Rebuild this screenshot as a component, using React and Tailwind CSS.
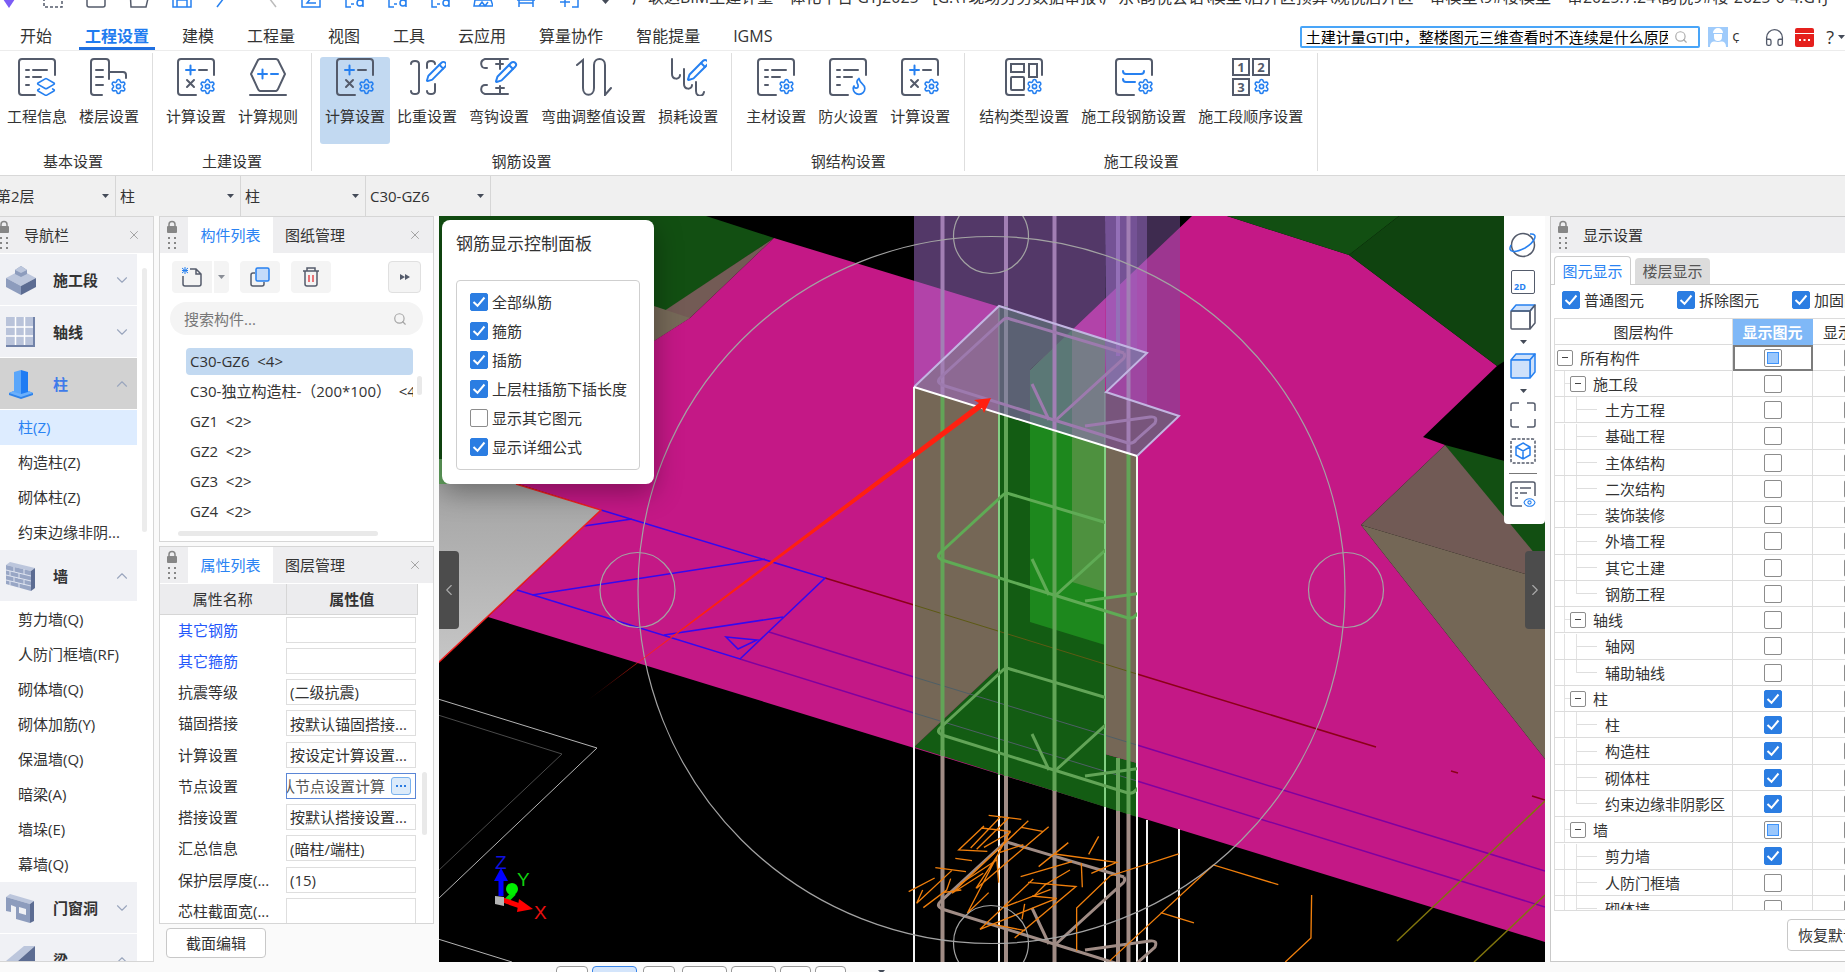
import { Settings, X, ChevronDown, ChevronUp, ChevronLeft, ChevronRight, Search, Pencil, Layers2, Flame, Headphones, Eye } from "lucide-react";

const DARK = "#545b6b";
const BLUE = "#2680f0";

/* ---------- small shared pieces ---------- */

function Check({ id, label, checked, partial, className = "" }) {
  return (
    <label htmlFor={id} className={`flex items-center gap-1 whitespace-nowrap ${className}`}>
      <span className="relative flex size-[18px] shrink-0">
        <input
          id={id}
          type="checkbox"
          defaultChecked={checked}
          aria-label={label ? undefined : id}
          className="peer size-[18px] appearance-none rounded-[2px] border border-[#8c8c8c] bg-white checked:border-[#2b7de2] checked:bg-[#2b7de2]"
        />
        <svg viewBox="0 0 18 18" className="pointer-events-none absolute inset-0 hidden peer-checked:block">
          <path d="M3.5 9 L7.5 12.8 L14.5 4.5" fill="none" stroke="#fff" strokeWidth="2" />
        </svg>
        {partial && <span className="absolute inset-[3px] border border-[#3e93fa] bg-[#9ac7fc]" />}
      </span>
      {label && <span>{label}</span>}
    </label>
  );
}

function Grip() {
  return (
    <svg width="12" height="30" viewBox="0 0 12 30" className="shrink-0">
      <path d="M3 7V4.5a3 3 0 0 1 6 0V7" fill="none" stroke="#868686" strokeWidth="1.5" />
      <rect x="1" y="6" width="10" height="7" rx="1" fill="#868686" />
      {[17, 22, 27].map((y) => (
        <g key={y} fill="#868686">
          <rect x="2" y={y} width="2" height="2" />
          <rect x="8" y={y} width="2" height="2" />
        </g>
      ))}
    </svg>
  );
}

function Caret({ className = "" }) {
  return (
    <svg width="7" height="4" viewBox="0 0 7 4" className={className}>
      <path d="M0 0h7L3.5 4z" fill="#444b58" />
    </svg>
  );
}

/* ---------- ribbon icons ---------- */

function Glyph({ children }) {
  return (
    <svg width="38" height="38" viewBox="0 0 38 38" fill="none" stroke={DARK} strokeWidth="2" strokeLinecap="round">
      {children}
    </svg>
  );
}

const Gear = ({ x = 21, y = 20 }) => <Settings x={x} y={y} size={17} color={BLUE} strokeWidth={2.2} />;

const Frame = () => <path d="M37 17V4a3 3 0 0 0-3-3H4a3 3 0 0 0-3 3v30a3 3 0 0 0 3 3h15" />;

const Lines = () => <path d="M8 12h3M15 12h14M8 19h3M15 19h8M8 27h3" />;

const CalcIcon = () => (
  <Glyph>
    <Frame />
    <path d="M9 12h9M13.500 7.500v9" stroke={BLUE} />
    <path d="M22 12h8M10 22l7 7M17 22l-7 7" />
    <Gear x={22} />
  </Glyph>
);

const icons = {
  info: () => (
    <Glyph>
      <path d="M37 17V4a3 3 0 0 0-3-3H4a3 3 0 0 0-3 3v30a3 3 0 0 0 3 3h13" />
      <Lines />
      <Layers2 x={18} y={19} size={20} color={BLUE} strokeWidth={2} />
    </Glyph>
  ),
  floor: () => (
    <Glyph>
      <path d="M12 37H4a3 3 0 0 1-3-3V4a3 3 0 0 1 3-3h12a3 3 0 0 1 3 3v17M6 12h7M6 19h7M6 27h7M19 14h14a3 3 0 0 1 3 3v3" />
      <Gear x={20} />
    </Glyph>
  ),
  calc: CalcIcon,
  rule: () => (
    <Glyph>
      <path d="M11 1h16a3 3 0 0 1 2 1l7 14-7 15a3 3 0 0 1-2 2H11a3 3 0 0 1-2-2L2 16 9 2a3 3 0 0 1 2-1z" />
      <path d="M9 16h9M13.500 11.500v9M22 16h7" stroke={BLUE} />
      <path d="M1 37h36" />
    </Glyph>
  ),
  weight: () => (
    <Glyph>
      <path d="M3 6c0-4 8-4 8 0v27c0 4-8 4-8 0M19 10V6c0-4 8-4 8 0M27 26v7c0 4-8 4-8 0" />
      <Pencil x={17} y={2} size={23} color={BLUE} strokeWidth={2} />
    </Glyph>
  ),
  hook: () => (
    <Glyph>
      <path d="M28 1H5c-6 2-4 9 0 9h2M20 1v10M16 6h7M28 36H5c-6-2-4-9 0-9h2M20 28v8M16 30h8" />
      <Pencil x={14} y={2} size={24} color={BLUE} strokeWidth={2} />
    </Glyph>
  ),
  bend: () => (
    <Glyph>
      <path d="M2 7l6-5v28c0 9 11 9 11 0V7c0-8 11-8 11 0v30l6-7" />
    </Glyph>
  ),
  loss: () => (
    <Glyph>
      <path d="M3 1v15c0 6 8 6 8 1M15 11v15c0 6 8 6 8 1M27 24v9c0 6 7 6 8 1" />
      <Pencil x={17} y={0} size={24} color={BLUE} strokeWidth={2} />
    </Glyph>
  ),
  material: () => (
    <Glyph>
      <Frame />
      <Lines />
      <Gear />
    </Glyph>
  ),
  fire: () => (
    <Glyph>
      <Frame />
      <Lines />
      <Flame x={20} y={18} size={20} color={BLUE} strokeWidth={2} />
    </Glyph>
  ),
  structure: () => (
    <Glyph>
      <Frame />
      <rect x="6" y="6" width="13" height="8" />
      <rect x="24" y="6" width="8" height="13" />
      <rect x="6" y="19" width="13" height="13" rx="1" />
      <Gear />
    </Glyph>
  ),
  section: () => (
    <Glyph>
      <Frame />
      <path d="M8 13c0 2 1 3 3 3h15c2 0 3-1 3-3M8 21c0 2 1 3 3 3h9" stroke={BLUE} />
      <Gear x={22} />
    </Glyph>
  ),
  order: () => (
    <Glyph>
      <rect x="1" y="1" width="16" height="16" />
      <rect x="21" y="1" width="16" height="16" />
      <rect x="1" y="21" width="16" height="16" />
      <g fill={DARK} stroke="none" fontSize="13" fontWeight="700" textAnchor="middle" fontFamily="Open Sans, sans-serif">
        <text x="9" y="14">1</text>
        <text x="29" y="14">2</text>
        <text x="9" y="34">3</text>
      </g>
      <Gear x={21} />
    </Glyph>
  ),
};

const ribbon = [
  { name: "基本设置", pad: "pl-0.5 pr-2", items: [["info", "工程信息"], ["floor", "楼层设置"]] },
  { name: "土建设置", pad: "px-2", items: [["calc", "计算设置"], ["rule", "计算规则"]] },
  {
    name: "钢筋设置",
    pad: "px-2",
    items: [["calc", "计算设置", true], ["weight", "比重设置"], ["hook", "弯钩设置"], ["bend", "弯曲调整值设置"], ["loss", "损耗设置"]],
  },
  { name: "钢结构设置", pad: "px-[9px]", items: [["material", "主材设置"], ["fire", "防火设置"], ["calc", "计算设置"]] },
  { name: "施工段设置", pad: "px-[9px]", items: [["structure", "结构类型设置"], ["section", "施工段钢筋设置"], ["order", "施工段顺序设置"]] },
];

function Ribbon() {
  return (
    <div className="flex h-[125px] shrink-0 border-b border-[#d8d8d8] bg-white pt-0.5 pb-1">
      {ribbon.map((group) => (
        <section key={group.name} className={`flex flex-col justify-between border-r border-[#dedede] pt-1 ${group.pad}`}>
          <div className="flex gap-0.5">
            {group.items.map(([icon, label, active]) => {
              const Icon = icons[icon];
              return (
                <button
                  key={label}
                  className={`flex h-[87px] flex-col items-center gap-2.5 rounded-[3px] px-[5px] pt-px whitespace-nowrap ${active ? "bg-[#c2d9f1]" : ""}`}
                >
                  <Icon />
                  <span className="leading-5">{label}</span>
                </button>
              );
            })}
          </div>
          <h2 className="text-center leading-5">{group.name}</h2>
        </section>
      ))}
    </div>
  );
}

/* ---------- top bars ---------- */

function QuickIcon({ kind }) {
  const shapes = {
    logo: <path d="M1 8l8-5 8 5-8 12z" fill="#7b5cf5" />,
    dashed: <rect x="1" y="1" width="18" height="18" stroke={DARK} strokeDasharray="3 2" />,
    file: <path d="M1 1h18v16a2 2 0 0 1-2 2H3a2 2 0 0 1-2-2z" stroke={DARK} />,
    open: <path d="M5 6h15l-3 13H2L1 1" stroke={DARK} />,
    save: <path d="M1 1h18v18H1zM5 19v-7h10v7" stroke={BLUE} />,
    undo: <path d="M12 6L2 19" stroke={BLUE} />,
    redo: <path d="M8 6l10 13" stroke="#bbb" />,
    sum: <path d="M1 1h18v18H1zM14 5l-8 10h9" stroke={BLUE} />,
    find: <path d="M2 1v18h5M10 16h-3M19 10v9M19 15a3 3 0 1 1-6 0 3 3 0 0 1 6 0" stroke={BLUE} />,
    cloud: <path d="M2 12h16l2 6H1zM6 18l3-4 3 4 3-4" stroke={BLUE} />,
    frame: <path d="M3 1v18M17 1v18M3 15h14M1 12h18" stroke={BLUE} />,
    add: <path d="M9 1h10v18h-6M1 14h10M6 9v10" stroke={BLUE} />,
  };
  return (
    <svg width="20" height="20" viewBox="0 0 20 20" fill="none" strokeWidth="1.500" className="shrink-0">
      {shapes[kind]}
    </svg>
  );
}

const quickTools = ["logo", "dashed", "file", "open", "save", "undo", "redo", "sum", "find", "find", "find", "cloud", "frame", "add"];
const menus = ["开始", "工程设置", "建模", "工程量", "视图", "工具", "云应用", "算量协作", "智能提量", "IGMS"];

function TopBars() {
  return (
    <header className="shrink-0 bg-white">
      <div className="flex h-2 items-end gap-[23px] overflow-hidden">
        {quickTools.map((kind, i) => (
          <QuickIcon key={i} kind={kind} />
        ))}
        <Caret className="mb-1 shrink-0" />
        <h1 className="flex-1 text-[16px] leading-[22px] whitespace-nowrap">
          广联达BIM土建计量一体化平台 GTJ2025 - [G:\1现场劳务数据审报\广东\韵悦会语\模型\后开区预算\观悦后开区一审模型\9#楼模型一审2025.7.24\韵悦9#楼-2025-6-4.GTJ
        </h1>
      </div>
      <div className="flex h-[43px] items-end border-b border-[#ececec]">
        <nav className="flex flex-1 gap-px pl-1 text-[16px]">
          {menus.map((m, i) => (
            <a key={m} href="#" className={`relative px-4 leading-[28px] ${i === 1 ? "font-bold text-[#1f7cf0]" : ""}`}>
              {m}
              {i === 1 && <span className="absolute inset-x-2.5 bottom-0 h-[3px] bg-[#1f6fe0]" />}
            </a>
          ))}
        </nav>
        <div className="mb-0.5 flex items-center">
          <div className="flex h-[22px] w-[400px] items-center rounded-[2px] border-2 border-[#49a5f8] px-1">
            <input
              aria-label="搜索"
              defaultValue="土建计量GTJ中，整楼图元三维查看时不连续是什么原因"
              className="h-4 min-w-0 flex-1 text-[15px] text-black outline-none"
            />
            <Search size={14} color="#aaa" className="mx-1.5" />
          </div>
          <svg width="20" height="20" viewBox="0 0 20 20" className="ml-2">
            <rect width="20" height="20" fill="#9fcbfb" />
            <path d="M5 6a5 5 0 0 1 10 0zM6 7h8v3a4 4 0 0 1-8 0zM2 20c0-6 4-6 8-5 4-1 8-1 8 5z" fill="#fff" />
          </svg>
          <span className="ml-1">¢</span>
          <Headphones size={21} color={DARK} strokeWidth={1.5} className="ml-6" />
          <svg width="19" height="19" viewBox="0 0 19 19" className="ml-2.5">
            <rect width="19" height="19" rx="2" fill="#e5201d" />
            <path d="M0 5.500h19" stroke="#fff" />
            <path d="M4 12h2M8.500 12h2M13 12h2" stroke="#fff" strokeWidth="2" />
          </svg>
          <span className="ml-3 text-[18px] leading-5">?</span>
          <Caret className="ml-1" />
        </div>
      </div>
    </header>
  );
}

const selectors = [["楼层", "第2层", "w-[116px]"], ["构件大类", "柱", "w-[125px] pl-1"], ["构件类型", "柱", "w-[125px] pl-1"], ["构件", "C30-GZ6", "w-[125px] pl-1"]];

function SelectorBar() {
  return (
    <div className="flex h-10 shrink-0 bg-[#f0f0f0]">
      {selectors.map(([name, value, cls], i) => (
        <div key={name} className={`relative flex items-center border-r border-[#d6d6d6] ${cls}`}>
          <select aria-label={name} className={`w-full appearance-none bg-transparent outline-none ${i === 0 ? "-ml-1" : ""}`}>
            <option>{value}</option>
          </select>
          <Caret className="absolute right-1.5" />
        </div>
      ))}
    </div>
  );
}

/* ---------- navigation ---------- */

const navIcons = {
  施工段: (
    <g>
      <path d="M0 13l15-8 15 8-15 8z" fill="#bcc6dc" />
      <path d="M0 13l15 8v9L0 22z" fill="#8d9cbd" />
      <path d="M30 13l-15 8v9l15-8z" fill="#5c6c92" />
      <path d="M9 5l6-4 6 4v4l-6 3-6-3z" fill="#8d9cbd" />
      <path d="M9 5l6-4 6 4-6 3z" fill="#bcc6dc" />
    </g>
  ),
  轴线: (
    <g>
      <rect width="29" height="30" fill="#7182a8" />
      <rect width="27" height="28" fill="#b9c3da" />
      <path d="M9.500 0v28M18.500 0v28M0 10h27M0 19h27" stroke="#fff" strokeWidth="1.500" />
    </g>
  ),
  柱: (
    <g>
      <path d="M3 24l12-5 12 5v2l-12 4-12-4z" fill="#2f83ea" />
      <path d="M3 24l12-5 12 5-12 4z" fill="#6cb0fb" />
      <path d="M8 3l7-2v24l-7-2z" fill="#5aa6fa" />
      <path d="M15 1l7 2v20l-7 2z" fill="#1f7cf3" />
    </g>
  ),
  墙: (
    <g>
      <path d="M0 4l4-3 25 6-4 3z" fill="#bcc6dc" />
      <path d="M0 4l25 6v20L0 23z" fill="#98a6c5" />
      <path d="M25 10l4-3v20l-4 3z" fill="#5c6c92" />
      <path d="M0 9l25 6M0 14l25 6M0 19l25 6M8 6v5M18 8v5M4 10v5M13 12v6M8 16v5M18 19v5M4 20v4M13 22v5" stroke="#dfe4f0" />
    </g>
  ),
  门窗洞: (
    <g>
      <path d="M0 4l4-3 24 7-4 3z" fill="#bcc6dc" />
      <path fillRule="evenodd" d="M0 4l24 7v19l-14-4v-12l-5-2v7l-5-1zM13 14v6l7 2v-6z" fill="#8d9cbd" />
      <path d="M24 11l4-3v20l-4 2z" fill="#5c6c92" />
    </g>
  ),
  梁: (
    <g>
      <path d="M0 16L18 1h11L12 16z" fill="#bcc6dc" />
      <path d="M12 16L29 1v16H12z" fill="#5c6c92" />
    </g>
  ),
};

const nav = [
  { name: "施工段" },
  { name: "轴线" },
  { name: "柱", open: true, active: true, items: ["柱(Z)", "构造柱(Z)", "砌体柱(Z)", "约束边缘非阴..."] },
  { name: "墙", open: true, items: ["剪力墙(Q)", "人防门框墙(RF)", "砌体墙(Q)", "砌体加筋(Y)", "保温墙(Q)", "暗梁(A)", "墙垛(E)", "幕墙(Q)"] },
  { name: "门窗洞" },
  { name: "梁", open: true },
];

function NavPanel() {
  return (
    <aside className="flex w-[154px] shrink-0 flex-col border-t border-r border-b border-[#d6d6d6] bg-white">
      <div className="flex h-9 shrink-0 items-center bg-[#eeeef0] pr-3">
        <span className="-ml-0.5">
          <Grip />
        </span>
        <h2 className="ml-3.5 flex-1">导航栏</h2>
        <button aria-label="关闭导航栏">
          <X size={14} color="#999" strokeWidth={1.5} />
        </button>
      </div>
      <div className="flex min-h-0 flex-1 pt-px">
        <div className="w-[137px] overflow-hidden">
          {nav.map((g) => (
            <div key={g.name}>
              <button className={`flex h-[52px] w-full items-center border-b border-white pr-1.5 pl-1.5 ${g.active ? "bg-[#d2d2d2]" : "bg-[#f0f1f5]"}`}>
                <svg width="30" height="30" viewBox="0 0 30 30">{navIcons[g.name]}</svg>
                <span className={`ml-[17px] flex-1 text-left font-semibold ${g.active ? "text-[#3f7bea]" : ""}`}>{g.name}</span>
                {g.open ? <ChevronUp size={18} color="#9aa6bd" strokeWidth={1.5} /> : <ChevronDown size={18} color="#9aa6bd" strokeWidth={1.5} />}
              </button>
              {g.items?.map((item, i) => (
                <a
                  key={item}
                  href="#"
                  className={`block pl-[18px] leading-[35px] whitespace-nowrap ${g.active && i === 0 ? "bg-[#ddecff] text-[#2a83f3]" : ""}`}
                >
                  {item}
                </a>
              ))}
            </div>
          ))}
        </div>
        <div className="mt-3.5 ml-[5px] h-[264px] w-[5px] rounded-full bg-[#ececec]" />
      </div>
    </aside>
  );
}

/* ---------- component list and properties ---------- */

function TabHeader({ tabs }) {
  return (
    <div className="flex h-9 shrink-0 items-center bg-[#eeeef0] pr-[11px] pl-1.5">
      <Grip />
      <button className="ml-2.5 h-full w-[85px] bg-white text-[#2a83f3]">{tabs[0]}</button>
      <button className="h-full flex-1 pl-3 text-left">{tabs[1]}</button>
      <button aria-label="关闭">
        <X size={14} color="#999" strokeWidth={1.5} />
      </button>
    </div>
  );
}

const components = ["C30-GZ6  <4>", "C30-独立构造柱-（200*100）  <4>", "GZ1  <2>", "GZ2  <2>", "GZ3  <2>", "GZ4  <2>"];

function ComponentPanel() {
  return (
    <section className="flex h-[326px] shrink-0 flex-col border border-[#d6d6d6] bg-white">
      <TabHeader tabs={["构件列表", "图纸管理"]} />
      <div className="mt-2 flex h-8 shrink-0 px-3">
        <button aria-label="新建" className="flex w-10 items-center justify-center rounded-l bg-[#f4f4f4]">
          <svg width="20" height="20" viewBox="0 0 20 20" fill="none" strokeWidth="1.500">
            <path d="M8 2h6l5 5v10a2 2 0 0 1-2 2H3a2 2 0 0 1-2-2V9M14 2v5h5" stroke={DARK} />
            <path d="M0 1l6 5M6 1L0 6M3 0v7M0 3.500h6" stroke={BLUE} strokeWidth="1" />
          </svg>
        </button>
        <button aria-label="新建选项" className="ml-0.5 flex w-[15px] items-center justify-center rounded-r bg-[#f4f4f4]">
          <Caret className="opacity-60" />
        </button>
        <button aria-label="复制" className="ml-[11px] flex w-10 items-center justify-center rounded bg-[#f4f4f4]">
          <svg width="20" height="20" viewBox="0 0 20 20" fill="none" strokeWidth="1.500">
            <path d="M5 6H3a2 2 0 0 0-2 2v9a2 2 0 0 0 2 2h9a2 2 0 0 0 2-2v-2" stroke={DARK} />
            <rect x="6" y="1" width="13" height="13" rx="1.500" stroke={BLUE} fill="#c4dbfa" />
          </svg>
        </button>
        <button aria-label="删除" className="ml-[11px] flex w-10 items-center justify-center rounded bg-[#f4f4f4]">
          <svg width="18" height="20" viewBox="0 0 18 20" fill="none" strokeWidth="1.500">
            <path d="M1 4h16M5 4V1h8v3M3 4v13a2 2 0 0 0 2 2h8a2 2 0 0 0 2-2V4" stroke={DARK} />
            <path d="M7 8v7M11 8v7" stroke="#e5484d" />
          </svg>
        </button>
        <button aria-label="更多" className="ml-auto flex w-[33px] items-center justify-center rounded border border-[#e0e0e0] bg-[#f4f4f4]">
          <svg width="10" height="6" viewBox="0 0 10 6">
            <path d="M0 0l5 3-5 3zM5 0l5 3-5 3z" fill={DARK} />
          </svg>
        </button>
      </div>
      <div className="mx-2.5 mt-[9px] flex h-[33px] shrink-0 items-center rounded-full bg-[#f4f4f4] pr-4 pl-3.5">
        <input aria-label="搜索构件" placeholder="搜索构件..." className="min-w-0 flex-1 outline-none placeholder:text-[#777]" />
        <Search size={14} color="#a5a5a5" />
      </div>
      <div className="mt-[13px] flex min-h-0 flex-1 pl-[26px]">
        <ul className="w-[227px] overflow-hidden">
          {components.map((c, i) => (
            <li key={c} className={`mb-[3px] rounded-sm pl-1 leading-[27px] whitespace-pre ${i === 0 ? "bg-[#c2d9f1]" : ""}`}>
              {c}
            </li>
          ))}
        </ul>
        <div className="mt-7 ml-1 h-[19px] w-[5px] rounded-full bg-[#e9e9e9]" />
      </div>
      <div className="mb-[5px] ml-[18px] h-[5px] w-[200px] rounded-full bg-[#e9e9e9]" />
    </section>
  );
}

const props = [
  ["其它钢筋", ""],
  ["其它箍筋", ""],
  ["抗震等级", "(二级抗震)"],
  ["锚固搭接", "按默认锚固搭接..."],
  ["计算设置", "按设定计算设置..."],
  ["节点设置", "按默认节点设置计算"],
  ["搭接设置", "按默认搭接设置..."],
  ["汇总信息", "(暗柱/端柱)"],
  ["保护层厚度(...", "(15)"],
  ["芯柱截面宽(...", ""],
];

function PropertyPanel() {
  return (
    <section className="mt-1 flex min-h-0 flex-1 flex-col">
      <div className="flex min-h-0 flex-1 flex-col overflow-hidden border border-[#d6d6d6] bg-white">
        <TabHeader tabs={["属性列表", "图层管理"]} />
        <div className="mt-px flex min-h-0 flex-1">
          <div className="w-[258px] overflow-hidden">
            <table className="w-full table-fixed border-collapse">
              <thead>
                <tr className="h-[30px] bg-[#ececee]">
                  <th className="w-[126px] border-r border-b border-[#d6d6d6] font-normal">属性名称</th>
                  <th className="border-r border-b border-[#d6d6d6] font-semibold">属性值</th>
                </tr>
              </thead>
              <tbody>
                {props.map(([name, value], i) => (
                  <tr key={name} className="h-[31px] nth-[4n]:h-8">
                    <td className="pl-[18px] whitespace-nowrap">
                      <label htmlFor={`prop-${i}`} className={i < 2 ? "text-[#2458fb]" : ""}>
                        {name}
                      </label>
                    </td>
                    <td>
                      <div className={`flex h-[26px] w-[130px] items-center overflow-hidden border ${i === 5 ? "border-[#5b86d6]" : "border-[#dedede]"}`}>
                        <input
                          id={`prop-${i}`}
                          defaultValue={value}
                          className={`h-6 min-w-0 flex-1 outline-none ${i === 5 ? "-indent-[37px] text-[#555]" : "pl-[3px]"}`}
                        />
                        {i === 5 && (
                          <button
                            aria-label="编辑节点设置"
                            className="mr-1 flex h-[18px] w-5 items-center justify-center gap-0.5 rounded-[3px] border border-[#7ab2ee] bg-[#dcebfa]"
                          >
                            <span className="size-0.5 bg-[#2a7be0]" />
                            <span className="size-0.5 bg-[#2a7be0]" />
                            <span className="size-0.5 bg-[#2a7be0]" />
                          </button>
                        )}
                      </div>
                    </td>
                  </tr>
                ))}
              </tbody>
            </table>
          </div>
          <div className="mt-[188px] ml-1 h-[63px] w-[5px] rounded-full bg-[#e9e9e9]" />
        </div>
      </div>
      <div className="flex h-[38px] shrink-0 items-start pt-1 pl-[7px]">
        <button className="h-[30px] w-[100px] rounded border border-[#c8c8c8] bg-white">截面编辑</button>
      </div>
    </section>
  );
}

/* ---------- 3D view ---------- */

// one stirrup outline, drawn again for each level of the column
const hoopBack = "M1054 420 L942 385 Q936 382 940 378 L1003 320 Q1006 317 1010 319 L1124 353";
const hoopCross = "M1124 353 Q1126 357 1122 360 L1056 420 M1032 384 L1049 420";
const hoopFront = "M1054 420 L1128 443 Q1133 444 1136 440 L1155 423 Q1158 416 1150 417 L1085 426";

function Hoop({ y = 0, color, width = 3, clip }) {
  return (
    <g clipPath={clip && `url(#${clip})`} fill="none" stroke={color} strokeWidth={width}>
      <g transform={`translate(0 ${y})`}>
        <path d={hoopBack} />
        <path d={hoopCross} />
      </g>
    </g>
  );
}

function HoopFront({ y = 0, color, width = 3, clip }) {
  return (
    <g clipPath={clip && `url(#${clip})`} fill="none" stroke={color} strokeWidth={width}>
      <path transform={`translate(0 ${y})`} d={hoopFront} />
    </g>
  );
}

function Scene() {
  return (
    <svg viewBox="439 216 1106 746" preserveAspectRatio="xMidYMid slice" className="block h-full w-full bg-black">
      <defs>
        <clipPath id="inner">
          <rect x="914" y="400" width="191" height="562" />
        </clipPath>
        <clipPath id="body">
          <rect x="914" y="400" width="223" height="562" />
        </clipPath>
        <linearGradient id="slab" x1="0" y1="0" x2="0" y2="1">
          <stop offset="0" stopColor="#a4a4a4" />
          <stop offset="1" stopColor="#c6c6c6" />
        </linearGradient>
        <linearGradient id="trail" gradientUnits="userSpaceOnUse" x1="588" y1="700" x2="680" y2="630">
          <stop offset="0" stopColor="#ff2010" stopOpacity="0.300" />
          <stop offset="1" stopColor="#ff2010" />
        </linearGradient>
      </defs>

      {/* surrounding slabs */}
      <path d="M438 216H706L774 238L655 318L600 460H438z" fill="#124f12" />
      <path d="M438 459H470V484H438z" fill="#63a45f" />
      <path d="M774 238L640 327V350L690 318z" fill="#735b55" />
      <path d="M654 306L690 318L640 350z" fill="#766958" />
      <path d="M438 484L516 484L601 510L438 663z" fill="url(#slab)" />
      <path d="M774 238L1000 307L1030 370L1192 216H1227L1349 255L1497 366L1423 437L1445 445L1361 525L1545 759V942L488 617L601 510L480 472L654 341L690 318z" fill="#c41886" />
      <path d="M1227 216H1399L1349 255z" fill="#124f12" />
      <path d="M1399 216H1545V335L1497 366L1349 255z" fill="#0f430f" />
      <path d="M1445 445L1545 472V566L1530 554z" fill="#124f12" />
      <path d="M1361 525L1445 445L1545 566V580z" fill="#715a55" />
      <path d="M1361 525L1545 580V759z" fill="#746756" />

      {/* upper column, translucent */}
      <path d="M914 216H1105V392L1000 307L914 387z" fill="#a16dca" fillOpacity="0.515" />
      <path d="M1105 216H1137V362L1106 392z" fill="#986bc3" fillOpacity="0.765" />
      <path d="M1137 216H1147V353L1137 362z" fill="#986bc3" fillOpacity="0.680" />
      <path d="M1147 216H1180V416L1106 392L1147 353z" fill="#78539a" fillOpacity="0.515" />
      <path d="M1106 392L1137 362L1147 353V405z" fill="#a16dca" fillOpacity="0.300" />

      {/* lower column */}
      <path d="M914 387L999 414V667L914 747z" fill="#756756" />
      <path d="M999 414L1105 446V754L1137 763V817L914 747L999 667z" fill="#135c13" />
      <path d="M1030 423L1105 446V645L1030 622z" fill="#1d881d" />
      <path d="M1072 436L1105 446V592L1072 582z" fill="#4e913f" />
      <path d="M1105 446L1137 456V763L1105 754z" fill="#756756" />

      {/* cut face between the levels */}
      <path d="M914 387L999 306V414z" fill="#8d6993" />
      <path d="M999 306L1074 329L1030 370V423L999 414z" fill="#5b6173" />
      <path d="M1030 370L1072 330V436L1030 423z" fill="#5b7876" />
      <path d="M1072 329L1105 339V446L1072 436z" fill="#767c87" />
      <path d="M1105 339L1147 353L1106 392z" fill="#836ea5" />
      <path d="M1105 392L1179 416L1137 456L1105 446z" fill="#78557c" />

      {/* axis lines and slab edges */}
      <g fill="none" strokeWidth="1">
        <path d="M825 578L914 605M1137 674L1376 747M1451 771L1458 773M1532 796L1545 800" stroke="#8c0018" strokeWidth="1.500" />
        <path d="M914 605L1137 674" stroke="#5d5a14" />
        <path d="M769 632L914 677M1137 745L1545 871M740 659L914 713M1137 781L1545 907" stroke="#8000a0" strokeWidth="1.500" />
        <path d="M914 677L1137 745M914 713L1137 781" stroke="#4f5f66" />
        <path d="M1545 801L1397 941M1545 895L1474 962" stroke="#80740c" strokeWidth="1.500" />
        <g stroke="#3408f0" strokeWidth="1.500">
          <path d="M601 510L825 578L740 659L517 590M532 595L765 559M584 526L632 519M664 635L783 617M726 637L757 640L738 649z" />
        </g>
        <path d="M438 663L601 510L516 484" stroke="#ee2020" strokeWidth="1.500" />
        <path d="M438 699L597 748L438 899M438 939L512 962" stroke="#b4b4b4" />
        <path d="M438 715L562 754L438 871" stroke="#4a4a4a" />
      </g>

      {/* longitudinal bars */}
      <g strokeWidth="4">
        <path d="M942.500 750V962M1006 770V962M1054.500 790V962M1118 811V962M1128.500 814V962" stroke="#a08c85" />
        <path d="M942.500 396V756M1006 416V776M1054.500 431V791M1128.500 454V814M1118 758V811" stroke="#62a457" />
        <path d="M942.500 216V396M1006 216V306M1054.500 216V431M1128.500 216V454" stroke="#a27fb4" />
        <path d="M1118 216V356" stroke="#9470b8" />
        <path d="M1006 306V416" stroke="#85859a" />
      </g>

      {/* column edges */}
      <g fill="none" strokeWidth="2">
        <path d="M914 747V962M999 775V962M1105 807V962M1137 817V962M1147 820V962M1179 829V962" stroke="#f4f4f4" />
        <path d="M999 414V775M1105 446V807" stroke="#84d084" />
        <path d="M914 387V747M1137 456V817" stroke="#f0f8f0" />
        <path d="M999 306V414M1105 392V446" stroke="#8a9ba0" strokeWidth="1" />
        <path d="M914 387L999 306L1147 353L1106 392L1179 416L1137 456" stroke="#c3b5e2" />
        <path d="M914 387L1137 456" stroke="#fff" />
      </g>

      {/* stirrups */}
      <Hoop color="#9d7aae" />
      <HoopFront color="#9d7aae" />
      <Hoop y={175} color="#5fab55" clip="inner" />
      <HoopFront y={175} color="#5fab55" clip="body" />
      <Hoop y={350} color="#62a457" clip="inner" />
      <HoopFront y={350} color="#62a457" clip="body" />
      <Hoop y={524} color="#a08c85" />
      <HoopFront y={524} color="#a08c85" />

      {/* annotation text strokes on the lower floor */}
      <g transform="translate(880 580) scale(0.3333)" fill="none" stroke="#f07f0c" strokeWidth="4">
        <path d="M326 706L424 718M312 738L236 810L322 814M304 744L390 754L262 1000L326 938M360 712L272 804M388 712L290 808M445 722L216 940L310 880M506 740L290 925M424 742L488 754M430 794L358 818L288 925M226 835L276 842M166 863L258 875M215 872L110 970L128 930M86 935L164 894M130 983L200 930L212 896M188 938L244 930" />
        <path d="M565 788L476 860M524 822L710 847L634 880M656 769L626 823M604 850L607 922M422 890L576 845M570 870L494 915M460 897L300 1048L530 955L456 948M444 907L588 920L404 1074M512 928L366 984M434 972L426 1018M344 1034L436 1052M350 830L356 908M240 912L350 840" />
        <path d="M896 822L690 888L590 984V1112M690 1142L1000 855L1195 914M842 998L942 1029M1295 945L1293 1074L1216 1146M312 802L392 756M500 910L460 950" />
      </g>

      {/* orbit control */}
      <g fill="none" stroke="#a3a3a3" strokeWidth="1.200">
        <circle cx="991.500" cy="590" r="353.500" />
        <circle cx="991" cy="236" r="37.500" />
        <circle cx="637.500" cy="590" r="37.500" />
        <circle cx="1346" cy="590" r="37.500" />
        <circle cx="991" cy="943" r="37.500" />
      </g>

      <path d="M588 700L979 403L974 400L991 398L984 413L982 408z" fill="url(#trail)" />

      {/* coordinate gizmo */}
      <path d="M505 902L514 893" stroke="#00e000" strokeWidth="5" />
      <circle cx="512" cy="889" r="6" fill="#00f000" />
      <path d="M503 900L520 906" stroke="#f00" strokeWidth="5" />
      <path d="M519 899L533 909L517 912z" fill="#f00" />
      <path d="M501 896V878" stroke="#00f" strokeWidth="5" />
      <path d="M494 881L501 868L508 881z" fill="#00f" />
      <path d="M495 896L504 897V906L495 904z" fill="#b4b4b4" />
      <g fontFamily="Liberation Sans, sans-serif" fontSize="19">
        <text x="495" y="869" fill="#1010e0">Z</text>
        <text x="517" y="886" fill="#10d010">Y</text>
        <text x="534" y="919" fill="#e81010">X</text>
      </g>
    </svg>
  );
}

const rebarOptions = [["全部纵筋", true], ["箍筋", true], ["插筋", true], ["上层柱插筋下插长度", true], ["显示其它图元", false], ["显示详细公式", true]];

function RebarDialog() {
  return (
    <div role="dialog" aria-label="钢筋显示控制面板" className="absolute top-1 left-[3px] h-[264px] w-[212px] rounded-lg bg-white px-3.5 pt-2.5 shadow-[0_8px_28px_rgba(0,0,0,0.35)]">
      <h2 className="text-[17px] leading-7">钢筋显示控制面板</h2>
      <fieldset className="mt-[22px] flex h-[190px] flex-col gap-[3px] rounded border border-[#cfcfcf] pt-2 pl-[13px]">
        {rebarOptions.map(([label, on]) => (
          <Check key={label} id={`rebar-${label}`} label={label} checked={on} className="h-[26px]" />
        ))}
      </fieldset>
    </div>
  );
}

function Cube({ fill, stroke }) {
  return (
    <svg width="26" height="26" viewBox="0 0 26 26" fill="none" strokeWidth="1.500" strokeLinejoin="round">
      <path d="M1 7L6 1h19l-5 6z" fill="#cfe1fa" stroke={BLUE} />
      <path d="M20 7l5-6v18l-5 6z" fill={fill} stroke={stroke} />
      <rect x="1" y="7" width="19" height="18" rx="1" fill={fill} stroke={stroke} />
    </svg>
  );
}

function ViewToolbar() {
  return (
    <div className="absolute top-0 right-0 flex h-[308px] w-[41px] flex-col items-center rounded-b bg-white pt-[15px] pr-[3px]">
      <button aria-label="动态观察">
        <svg width="28" height="28" viewBox="0 0 28 28" fill="none" strokeWidth="1.500">
          <circle cx="14" cy="14" r="11.500" stroke={DARK} />
          <path d="M21 3c9-1 5 8-5 14C6 22-2 22 2 14" stroke={BLUE} />
        </svg>
      </button>
      <button aria-label="二维视图" className="mt-[11px] flex size-6 items-end rounded-[2px] border border-[#545b6b] pl-0.5 text-[9px] leading-[13px] font-bold text-[#2680f0]">
        2D
      </button>
      <button aria-label="视图方向" className="mt-2.5 flex flex-col items-center gap-2.5">
        <Cube fill="none" stroke={DARK} />
        <Caret />
      </button>
      <button aria-label="显示样式" className="mt-[9px] flex flex-col items-center gap-2.5">
        <Cube fill="#cfe1fa" stroke={BLUE} />
        <Caret />
      </button>
      <button aria-label="全屏" className="mt-[9px]">
        <svg width="26" height="26" viewBox="0 0 26 26" fill="none" stroke={DARK} strokeWidth="1.500">
          <path d="M1 9V3a2 2 0 0 1 2-2h6M17 1h6a2 2 0 0 1 2 2v6M25 17v6a2 2 0 0 1-2 2h-6M9 25H3a2 2 0 0 1-2-2v-6" />
        </svg>
      </button>
      <button aria-label="局部三维" className="mt-2.5">
        <svg width="26" height="26" viewBox="0 0 26 26" fill="none" strokeWidth="1.500">
          <rect x="1" y="1" width="24" height="24" rx="2" stroke={DARK} strokeDasharray="3 1.500" />
          <path d="M13 5l7 4v8l-7 4-7-4V9zM6 9l7 4 7-4M13 13v8" stroke={BLUE} />
        </svg>
      </button>
      <span className="mt-[9px] h-px w-7 bg-[#777]" />
      <button aria-label="显示设置" className="mt-[7px]">
        <svg width="26" height="26" viewBox="0 0 26 26" fill="none" stroke={DARK} strokeWidth="1.500">
          <path d="M25 15V3a2 2 0 0 0-2-2H3a2 2 0 0 0-2 2v20a2 2 0 0 0 2 2h9M5 7h3M10 7h11M5 12h3M10 12h7M5 17h3" />
          <Eye x={13} y={15} size={13} color={BLUE} />
        </svg>
      </button>
    </div>
  );
}

function View3D() {
  return (
    <main className="relative ml-[5px] min-w-0 flex-1 overflow-hidden">
      <div className="absolute inset-0">
        <Scene />
      </div>
      <RebarDialog />
      <ViewToolbar />
      <button aria-label="收起左侧面板" className="absolute top-[335px] left-0 flex h-[78px] w-5 items-center justify-center rounded-r bg-[#4c4c4c]">
        <ChevronLeft size={18} color="#aaa" strokeWidth={1.5} />
      </button>
      <button aria-label="收起右侧面板" className="absolute top-[335px] right-0 flex h-[78px] w-5 items-center justify-center rounded-l bg-[#4c4c4c]">
        <ChevronRight size={18} color="#aaa" strokeWidth={1.5} />
      </button>
    </main>
  );
}

/* ---------- display settings ---------- */

// [level, name, state, last child]
const layers = [
  [0, "所有构件", "partial"],
  [1, "施工段"],
  [2, "土方工程"],
  [2, "基础工程"],
  [2, "主体结构"],
  [2, "二次结构"],
  [2, "装饰装修"],
  [2, "外墙工程"],
  [2, "其它土建"],
  [2, "钢筋工程", "", true],
  [1, "轴线"],
  [2, "轴网"],
  [2, "辅助轴线", "", true],
  [1, "柱", "on"],
  [2, "柱", "on"],
  [2, "构造柱", "on"],
  [2, "砌体柱", "on"],
  [2, "约束边缘非阴影区", "on", true],
  [1, "墙", "partial"],
  [2, "剪力墙", "on"],
  [2, "人防门框墙"],
  [2, "砌体墙"],
];

function Toggle({ name }) {
  return (
    <button aria-label={`折叠${name}`} className="mr-[7px] flex size-4 shrink-0 items-center justify-center rounded-[2px] border border-[#8c8c8c] bg-white">
      <span className="h-px w-1.5 bg-[#444]" />
    </button>
  );
}

function LayerRow({ row, index }) {
  const [level, name, state, last] = row;
  return (
    <tr className="h-[26px] nth-[4n]:h-[27px]">
      <td className="border-r border-b border-[#dcdcdc] p-0">
        <div className="flex h-[25px] items-center whitespace-nowrap">
          {level === 0 && <span className="w-0.5" />}
          {level > 0 && <span className="h-full w-2.5 shrink-0 border-r border-[#e2e2e2]" />}
          {level === 1 && <span className="h-px w-[5px] shrink-0 bg-[#e2e2e2]" />}
          {level === 2 && (
            <>
              <span className={`w-3 shrink-0 self-start border-r border-[#e2e2e2] ${last ? "h-1/2" : "h-full"}`} />
              <span className="mr-2 h-px w-5 shrink-0 bg-[#dedede]" />
            </>
          )}
          {level < 2 && <Toggle name={name} />}
          <span>{name}</span>
        </div>
      </td>
      <td className={`border-r border-b p-0 ${index === 0 ? "border-[#777] outline-2 -outline-offset-2 outline-[#7c7c7c]" : "border-[#dcdcdc]"}`}>
        <Check id={`show-${index}-${name}`} checked={state === "on"} partial={state === "partial"} className="justify-center" />
      </td>
      <td className="border-b border-[#dcdcdc] p-0">
        <Check id={`label-${index}-${name}`} className="justify-center" />
      </td>
    </tr>
  );
}

function DisplayPanel() {
  return (
    <aside className="ml-[5px] flex w-[295px] shrink-0 flex-col overflow-hidden border-t border-b border-l border-[#c9c9c9] bg-white">
      <div className="flex h-9 shrink-0 items-center bg-[#eeeef0] pl-1.5">
        <Grip />
        <h2 className="ml-3.5">显示设置</h2>
      </div>
      <div className="mt-[3px] flex h-[29px] shrink-0 items-end border-b border-[#cdcdcd] pl-[3px]">
        <button className="-mb-px h-[29px] w-[77px] rounded-t border border-b-0 border-[#cdcdcd] bg-white text-[#2a83f3]">图元显示</button>
        <button className="ml-1 h-[26px] w-[75px] rounded-t bg-[#dcdcdc] text-[#555]">楼层显示</button>
      </div>
      <div className="flex h-[33px] shrink-0 items-center gap-[33px] pb-1 pl-[11px]">
        <Check id="kind-normal" label="普通图元" checked />
        <Check id="kind-removed" label="拆除图元" checked />
        <Check id="kind-strengthened" label="加固图元" checked />
      </div>
      <div className="ml-[3px] min-h-0 flex-1 overflow-hidden border-t border-b border-l border-[#dcdcdc]">
        <table className="w-[338px] table-fixed border-separate border-spacing-0">
          <thead>
            <tr className="h-[26px]">
              <th className="w-[178px] border-r border-b border-[#dcdcdc] p-0 font-normal">图层构件</th>
              <th className="w-[80px] border-r border-b border-[#7fb8f7] bg-[#7fb8f7] p-0 font-semibold text-white">显示图元</th>
              <th className="border-b border-[#dcdcdc] p-0 font-normal">显示名称</th>
            </tr>
          </thead>
          <tbody>
            {layers.map((row, i) => (
              <LayerRow key={i} row={row} index={i} />
            ))}
          </tbody>
        </table>
      </div>
      <div className="flex h-[50px] shrink-0 items-start pt-2 pl-[236px]">
        <button className="h-8 shrink-0 rounded border border-[#c8c8c8] px-2.5 whitespace-nowrap">恢复默认设置</button>
      </div>
    </aside>
  );
}

const statusButtons = ["w-8", "w-[45px] ml-1", "w-8 ml-1.5", "w-[45px] ml-[7px]", "w-[45px] ml-1", "w-[31px] ml-1", "w-[31px] ml-1"];

export default function App() {
  return (
    <div className="flex h-screen flex-col overflow-hidden bg-[#fafafa] font-['Open_Sans','Noto_Sans_CJK_SC',sans-serif] text-[15px] leading-5 text-[#333]">
      <TopBars />
      <Ribbon />
      <SelectorBar />
      <div className="flex min-h-0 flex-1">
        <NavPanel />
        <div className="ml-[5px] flex w-[275px] shrink-0 flex-col">
          <ComponentPanel />
          <PropertyPanel />
        </div>
        <View3D />
        <DisplayPanel />
      </div>
      <footer className="flex h-2.5 shrink-0 items-start overflow-hidden pt-1 pl-[556px]">
        {statusButtons.map((cls, i) => (
          <button
            key={i}
            aria-label={`状态${i + 1}`}
            className={`h-6 shrink-0 rounded border ${i === 1 ? "border-[#3a85e8] bg-[#d4e5fb]" : "border-[#999] bg-white"} ${cls}`}
          />
        ))}
        <Caret className="mt-1 ml-8" />
      </footer>
    </div>
  );
}
